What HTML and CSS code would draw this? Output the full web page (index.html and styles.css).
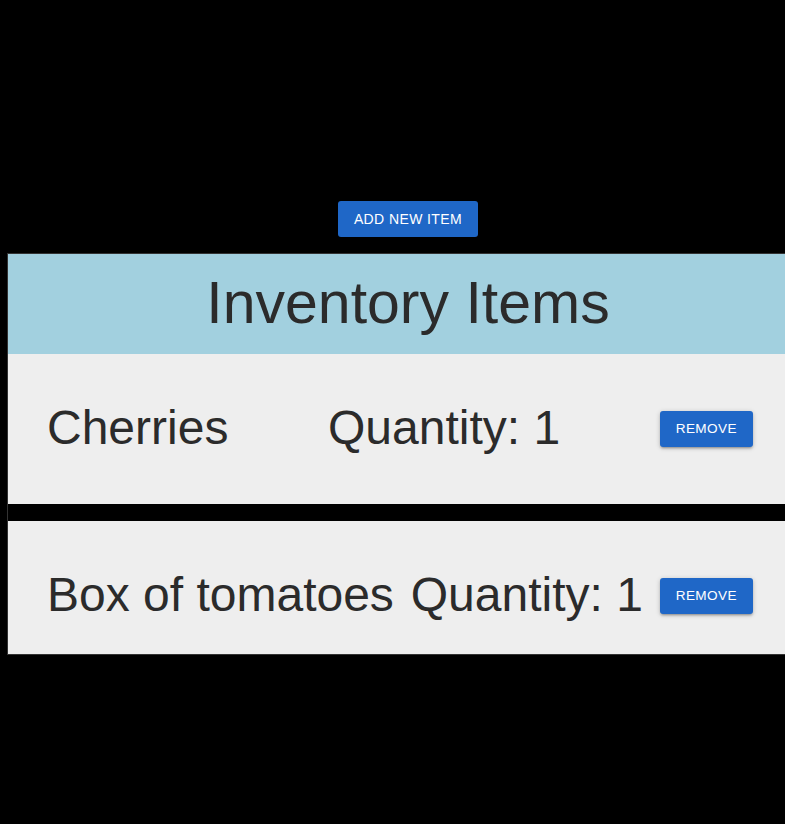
FILE: index.html
```html
<!DOCTYPE html>
<html lang="en">
<head>
    <meta charset="UTF-8">
    <meta name="viewport" content="width=device-width, initial-scale=1.0">
    <title>Inventory</title>
    <link rel="stylesheet" href="styles.css">
</head>
<body>
<div class="page">
    <div class="toolbar">
        <button class="btn" type="button">Add new item</button>
    </div>
    <div class="inventory">
        <h2 class="inventory-title">Inventory Items</h2>
        <div class="inventory-list">
            <div class="inventory-item">
                <h3 class="item-name">Cherries</h3>
                <h3 class="item-qty">Quantity: 1</h3>
                <button class="btn btn-remove" type="button">Remove</button>
            </div>
            <div class="inventory-item">
                <h3 class="item-name">Box of tomatoes</h3>
                <h3 class="item-qty">Quantity: 1</h3>
                <button class="btn btn-remove" type="button">Remove</button>
            </div>
        </div>
    </div>
</div>
</body>
</html>
```

FILE: styles.css
```css
body {
    margin: 0;
    background-color: #000;
    font-family: "Liberation Sans", Arial, Helvetica, sans-serif;
    color: #2b2b2b;
    overflow-x: hidden;
}
.page {
    padding: 201px 0 0 7px;
}
.toolbar {
    width: 802px;
    text-align: center;
    margin-bottom: 16px;
}
.btn {
    display: inline-block;
    height: 36px;
    line-height: 36px;
    padding: 0 16px;
    font-family: inherit;
    font-size: 14px;
    letter-spacing: 0.4px;
    text-transform: uppercase;
    color: #fff;
    background-color: #1f67c7;
    border: none;
    border-radius: 3px;
    cursor: pointer;
    box-shadow: 0 2px 2px 0 rgba(0, 0, 0, 0.14), 0 3px 1px -2px rgba(0, 0, 0, 0.12), 0 1px 5px 0 rgba(0, 0, 0, 0.2);
}
.btn-remove {
    font-size: 13.6px;
    height: 36px;
}
.inventory {
    width: 800px;
    height: 400px;
    border: 1px solid #333;
    overflow: hidden;
}
.inventory-title {
    margin: 0;
    height: 100px;
    line-height: 98px;
    text-align: center;
    font-size: 59px;
    font-weight: normal;
    background-color: #a2d0df;
}
.inventory-item {
    display: flex;
    align-items: center;
    justify-content: space-between;
    height: 150px;
    padding: 0 55px 0 39px;
    margin-bottom: 17px;
    background-color: #eeeeee;
}
.item-name,
.item-qty {
    margin: 0 0 4px;
    font-size: 48px;
    font-weight: normal;
}
```
